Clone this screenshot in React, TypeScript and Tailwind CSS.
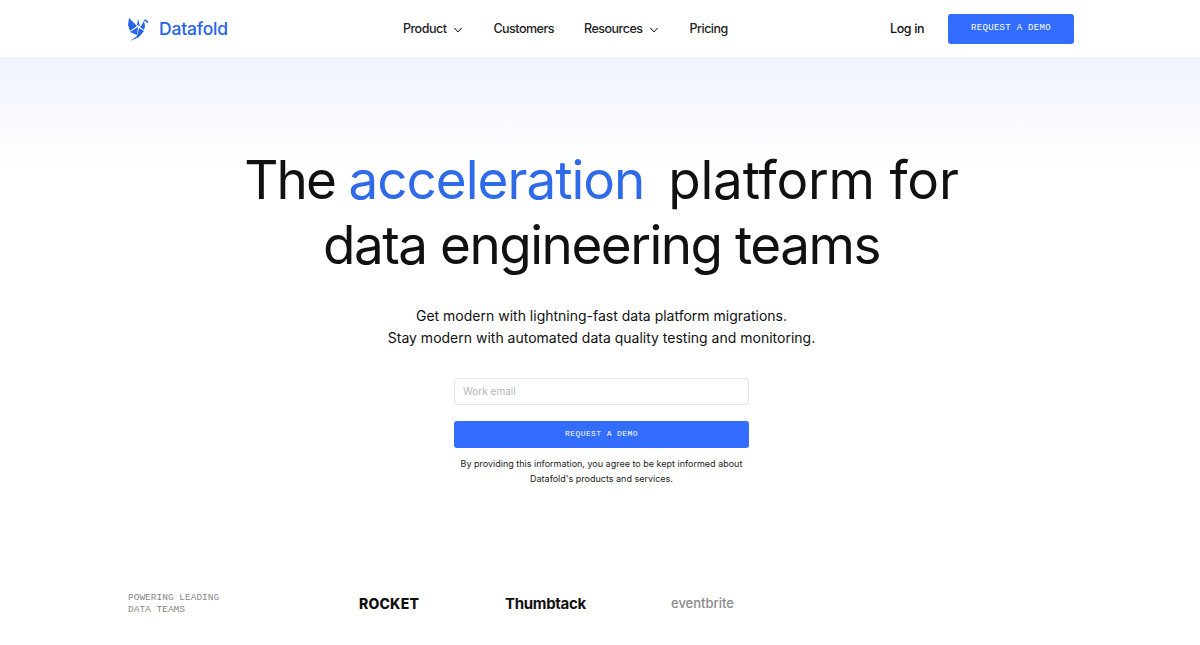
import React from 'react';
import { ChevronDown } from 'lucide-react';

const sans = "font-['Inter',sans-serif]";
const mono = "font-['Liberation_Mono',monospace]";

const Logo: React.FC = () => (
  <svg width="20" height="24" viewBox="0 0 20 24" fill="#2563eb" className="shrink-0">
    <polygon points="1,1 9,9 2,14 0,8" />
    <polygon points="2,15 10,10 9,18" />
    <polygon points="2,24 9,19 11,11 16,14 11,20" />
    <polygon points="10,2 12,9 9,8" />
    <polygon points="13,9 16,4 17,9 16,13 12,10" />
    <path d="M16 4 Q18 2 20 6" fill="none" stroke="#2563eb" strokeWidth="1.5" />
  </svg>
);

const NavItem: React.FC<{ label: string; caret?: boolean; className?: string }> = ({ label, caret, className }) => (
  <a className={`flex items-center gap-[5px] text-[12.5px] font-medium text-[#222] leading-none tracking-[-0.5px] ${className ?? ''}`}>
    {label}
    {caret && <ChevronDown size={14} strokeWidth={1.8} className="mt-[2px]" />}
  </a>
);

export default function App() {
  return (
    <div className={`h-[645px] overflow-hidden bg-white ${sans}`}>
      <header className="h-[58px] bg-white border-b border-[#eceff6]">
        <div className="mx-auto w-[946px] h-full flex items-center relative left-[1px]">
          <div className="w-[275px] flex items-center gap-[11px]">
            <Logo />
            <span className="text-[17.5px] font-medium text-[#2563eb] tracking-[-0.2px] mt-[1px]">Datafold</span>
          </div>
          <nav className="flex items-center gap-[28px] mt-[1px]">
            <NavItem label="Product" caret />
            <NavItem label="Customers" className="mr-[2px]" />
            <NavItem label="Resources" caret />
            <NavItem label="Pricing" />
          </nav>
          <div className="ml-auto flex items-center gap-[24px]">
            <a className="text-[12.5px] font-medium text-[#111] tracking-[-0.4px] mt-[1px]">Log in</a>
            <button className={`w-[126px] h-[30px] rounded-[3px] bg-[#336dff] text-white text-[9px] tracking-[0.3px] ${mono}`}>
              REQUEST A DEMO
            </button>
          </div>
        </div>
      </header>

      <main className="bg-gradient-to-b from-[#eff3fd] to-white to-[110px] pt-[90px] pl-[3px] flex flex-col items-center">
        <h1 className="text-[53px] leading-[65px] font-normal text-[#111] text-center tracking-[-1.5px]">
          <span className="tracking-[-1.9px]">The</span>{' '}
          <span className="text-[#2f6be8] tracking-[-1px]">acceleration</span>&nbsp;&nbsp;
          <span className="tracking-[-0.2px] ml-[-3px]">platform for</span>
          <br />
          data engineering teams
        </h1>
        <p className="mt-[27px] text-[14px] leading-[22px] text-[#111] text-center">
          Get modern with lightning-fast data platform migrations.
          <br />
          Stay modern with automated data quality testing and monitoring.
        </p>
        <div className="mt-[29px] w-[295px] flex flex-col items-stretch">
          <input
            placeholder="Work email"
            className="h-[27px] px-2 pb-[2px] rounded-[3px] border border-[#e4e4e4] bg-white text-[10px] placeholder:text-[#b5b5b5] outline-none"
          />
          <button className={`mt-[16px] h-[27px] pb-[1px] rounded-[3px] bg-[#336dff] text-white text-[8px] tracking-[0.4px] ${mono}`}>
            REQUEST A DEMO
          </button>
          <p className="mt-[8px] text-[9px] leading-[15px] text-[#222] text-center whitespace-nowrap">
            By providing this information, you agree to be kept informed about
            <br />
            Datafold's products and services.
          </p>
        </div>
      </main>

      <section className="mx-auto w-[944px] mt-[106px] flex items-center">
        <p className={`w-[231px] text-[9.5px] leading-[12px] text-[#888] ${mono}`}>
          POWERING LEADING
          <br />
          DATA TEAMS
        </p>
        <span className="w-[146px] text-[14px] font-extrabold text-[#111] tracking-[0.2px] mb-[2px]">ROCKET</span>
        <span className="w-[166px] text-[15px] font-bold text-[#111] tracking-[-0.3px]">Thumbtack</span>
        <span className="text-[13px] font-medium text-[#8a8a8a]">eventbrite</span>
      </section>
    </div>
  );
}
